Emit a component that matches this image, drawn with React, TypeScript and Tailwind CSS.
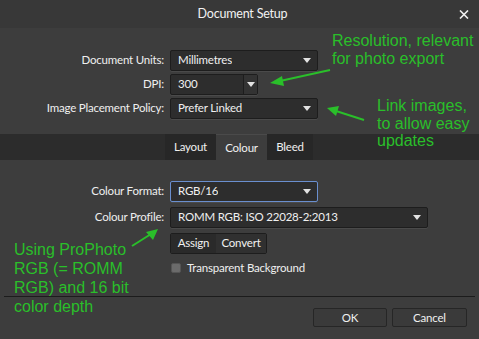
import React from 'react';

const ui = { fontFamily: 'Lato, "Noto Sans", sans-serif' };
const note = { fontFamily: '"Liberation Sans", Arial, sans-serif' };

const Caret: React.FC = () => (
  <svg width="8" height="5" viewBox="0 0 8 5" className="shrink-0">
    <polygon points="0,0 8,0 4,5" fill="#e2e2e2" />
  </svg>
);

interface SelectProps {
  value: string;
  width: string;
  focused?: boolean;
}

const Select: React.FC<SelectProps> = ({ value, width, focused }) => (
  <div
    className={`${width} h-[21px] flex items-center justify-between pl-[7px] pr-[6px] rounded-[2px] bg-[#2d2d2d] border ${
      focused ? 'border-[#6a8fcf]' : 'border-[#1d1d1d]'
    } shadow-[0_1px_0_#4a4a4a]`}
  >
    <span className="text-[#f0f0f0] truncate">{value}</span>
    <Caret />
  </div>
);

const Row: React.FC<{ label: string; children: React.ReactNode }> = ({ label, children }) => (
  <div className="flex items-center h-[22px]">
    <div className="w-[165px] pr-[1px] text-right text-[#efefef]">{label}</div>
    <div className="pl-[5px] flex items-center">{children}</div>
  </div>
);

export default function App() {
  return (
    <div style={ui} className="relative w-[479px] h-[339px] overflow-hidden bg-[#3d3d3d] text-[11.5px] tracking-[-0.2px] flex flex-col">
      {/* Title bar */}
      <div className="relative h-[28px] shrink-0 bg-[#383838] flex items-center justify-center">
        <span className="text-[#f2f2f2] text-[12.5px] pl-[6px]">Document Setup</span>
        <svg className="absolute right-[10px] top-[10px]" width="10" height="9" viewBox="0 0 10 9">
          <path d="M1 0.5 L9 8.5 M9 0.5 L1 8.5" stroke="#f0f0f0" strokeWidth="1.6" />
        </svg>
      </div>

      {/* Document settings */}
      <div className="flex flex-col gap-[2px] pt-[21px]">
        <Row label="Document Units:">
          <Select value="Millimetres" width="w-[148px]" />
        </Row>
        <Row label="DPI:">
          <div className="w-[88px] h-[21px] flex rounded-[2px] bg-[#2d2d2d] border border-[#1d1d1d] shadow-[0_1px_0_#4a4a4a]">
            <div className="flex-1 flex items-center pl-[7px] text-[#f0f0f0]">300</div>
            <div className="w-[14px] flex items-center justify-center border-l border-[#1d1d1d] bg-[#333333]">
              <Caret />
            </div>
          </div>
        </Row>
        <Row label="Image Placement Policy:">
          <Select value="Prefer Linked" width="w-[148px]" />
        </Row>
      </div>

      {/* Tabs */}
      <div className="mt-[15px] h-[26px] shrink-0 bg-[#2c2c2c] flex pl-[165px]">
        <div className="w-[51px] flex items-center justify-center bg-[#272727] text-[#f0f0f0]">Layout</div>
        <div className="w-[51px] flex items-center justify-center bg-[#3d3d3d] border-t border-[#4a4a4a] text-[#f0f0f0]">Colour</div>
        <div className="w-[46px] flex items-center justify-center bg-[#272727] text-[#f0f0f0]">Bleed</div>
      </div>

      {/* Colour settings */}
      <div className="flex flex-col gap-[4px] pt-[20px]">
        <Row label="Colour Format:">
          <Select value="RGB/16" width="w-[148px]" focused />
        </Row>
        <Row label="Colour Profile:">
          <Select value="ROMM RGB: ISO 22028-2:2013" width="w-[258px]" />
        </Row>
        <div className="flex items-center h-[22px] pl-[170px]">
          <div className="flex h-[21px] rounded-[2px] border border-[#1d1d1d] overflow-hidden text-[#f0f0f0]">
            <div className="w-[45px] flex items-center justify-center bg-[#2a2a2a]">Assign</div>
            <div className="w-[50px] flex items-center justify-center bg-[#303030]">Convert</div>
          </div>
        </div>
        <div className="flex items-center gap-[6px] pl-[171px] pt-[1px]">
          <div className="w-[10px] h-[10px] rounded-[2px] bg-[#6b6b6b] border border-[#555555]" />
          <span className="text-[#efefef]">Transparent Background</span>
        </div>
      </div>

      <div className="flex-1" />
      <div className="mx-[4px] h-px bg-[#1c1c1c]" />

      {/* Buttons */}
      <div className="flex justify-end gap-[5px] pr-[12px] pt-[11px] pb-[12px]">
        <button className="w-[74px] h-[19px] rounded-[2px] bg-[#3a3a3a] border border-[#262626] text-[#f0f0f0]">OK</button>
        <button className="w-[75px] h-[19px] rounded-[2px] bg-[#3a3a3a] border border-[#262626] text-[#f0f0f0]">Cancel</button>
      </div>

      {/* Annotations */}
      <div style={note} className="absolute left-[332px] top-[32px] text-[16px] tracking-normal leading-[17.5px] text-[#2abf2a]">
        Resolution, relevant
        <br />
        for photo export
      </div>
      <div style={note} className="absolute left-[377px] top-[97px] text-[16px] tracking-normal leading-[17.5px] text-[#2abf2a]">
        Link images,
        <br />
        to allow easy
        <br />
        updates
      </div>
      <div style={note} className="absolute left-[14px] top-[240px] text-[16px] tracking-normal leading-[19px] text-[#2abf2a]">
        Using ProPhoto
        <br />
        RGB (= ROMM
        <br />
        RGB) and 16 bit
        <br />
        color depth
      </div>
      <svg className="absolute left-0 top-0 pointer-events-none" width="479" height="339" viewBox="0 0 479 339">
        <g stroke="#2abf2a" strokeWidth="2" fill="#2abf2a">
          <line x1="330" y1="70" x2="280" y2="81" />
          <polygon points="270,83 282,76 284,86" stroke="none" />
          <line x1="364" y1="120" x2="336" y2="111" />
          <polygon points="327,108 339,106 336,116" stroke="none" />
          <line x1="132" y1="246" x2="151" y2="234" />
          <polygon points="158,229 153,240 146,232" stroke="none" />
        </g>
      </svg>
    </div>
  );
}
